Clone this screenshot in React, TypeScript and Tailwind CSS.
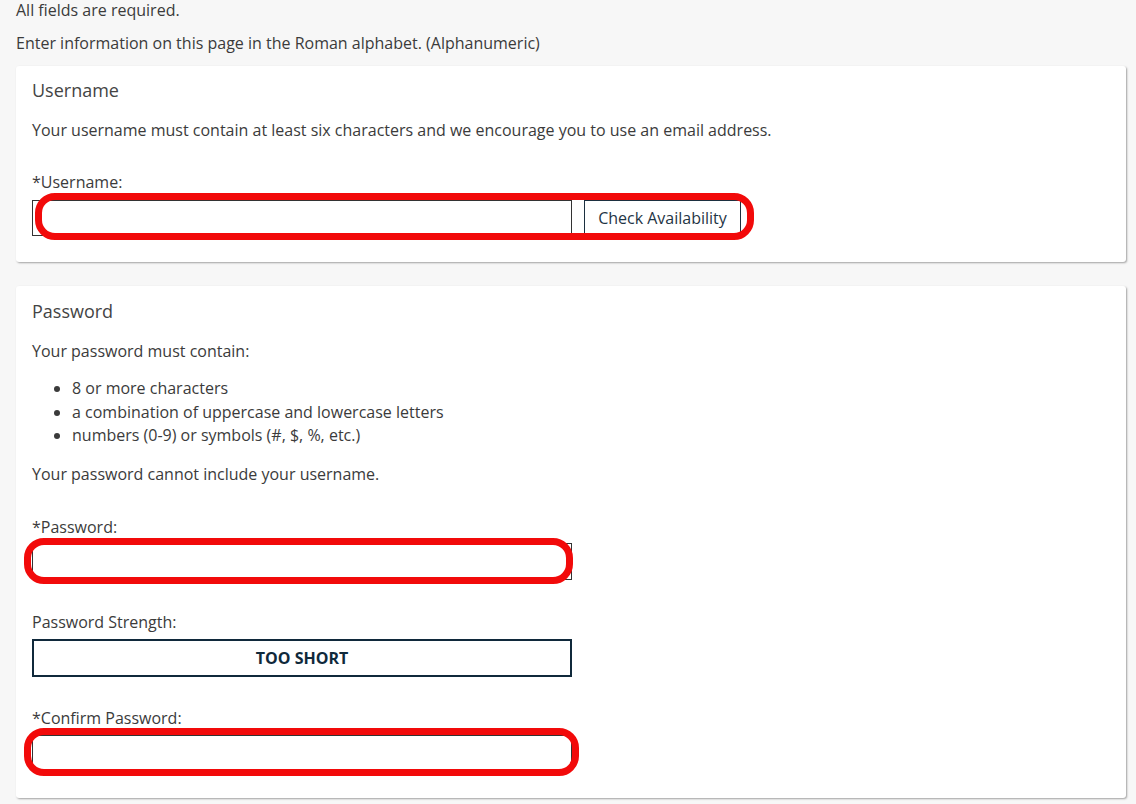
import React from "react";

function Oval({ className }: { className: string }) {
  // red annotation ring drawn over the field
  return (
    <div
      className={`pointer-events-none absolute rounded-[20px] border-[7px] border-[#f20a0a] ${className}`}
    />
  );
}

export default function App() {
  return (
    <div
      className="min-h-[804px] bg-[#f7f7f7] pl-4 pr-[10px] text-[16px] leading-[22px] text-[#3b3b3b]"
      style={{ fontFamily: "'Open Sans', 'Liberation Sans', sans-serif" }}
    >
      <p className="leading-[20px]">All fields are required.</p>
      <p className="mt-[13px] leading-[20px]">
        Enter information on this page in the Roman alphabet. (Alphanumeric)
      </p>

      {/* Username card */}
      <section className="mt-[13px] rounded-[3px] bg-white px-4 pt-3 pb-[26px] shadow-[1px_1px_2px_rgba(0,0,0,0.35)]">
        <h2 className="text-[18px] leading-[24px] text-[#444]">Username</h2>
        <p className="mt-[17px]">
          Your username must contain at least six characters and we encourage
          you to use an email address.
        </p>
        <label className="mt-[30px] block">*Username:</label>
        <div className="relative mt-[7px] flex">
          <input className="h-[36px] w-[540px] border border-[#333] bg-white" />
          <button className="ml-[12px] h-[36px] w-[157px] border border-[#1c3040] bg-white text-[16px] text-[#1f3545]">
            Check Availability
          </button>
          <Oval className="-top-[7px] left-[3px] h-[47px] w-[719px]" />
        </div>
      </section>

      {/* Password card */}
      <section className="mt-6 rounded-[3px] bg-white px-4 pt-[13px] pb-[27px] shadow-[1px_1px_2px_rgba(0,0,0,0.35)]">
        <h2 className="text-[18px] leading-[24px] text-[#444]">Password</h2>
        <p className="mt-[17px]">Your password must contain:</p>
        <ul className="mt-[15px] list-disc pl-10 leading-[23.5px]">
          <li>8 or more characters</li>
          <li>a combination of uppercase and lowercase letters</li>
          <li>numbers (0-9) or symbols (#, $, %, etc.)</li>
        </ul>
        <p className="mt-[15px]">Your password cannot include your username.</p>

        <label className="mt-[31px] block">*Password:</label>
        <div className="relative mt-[5px] w-[540px]">
          <input
            type="password"
            className="block h-[37px] w-full border border-[#333] bg-white"
          />
          <Oval className="-top-[5px] -left-[8px] h-[46px] w-[549px]" />
        </div>

        <label className="mt-[31px] block">Password Strength:</label>
        <div className="mt-[6px] flex h-[38px] w-[540px] items-center justify-center border-2 border-[#10293b] text-[16px] font-bold text-[#10293b]">
          TOO SHORT
        </div>

        <label className="mt-[30px] block">*Confirm Password:</label>
        <div className="relative mt-[6px] w-[540px]">
          <input
            type="password"
            className="block h-[36px] w-full border border-[#333] bg-white"
          />
          <Oval className="-top-[7px] -left-[8px] h-[48px] w-[555px]" />
        </div>
      </section>
    </div>
  );
}
